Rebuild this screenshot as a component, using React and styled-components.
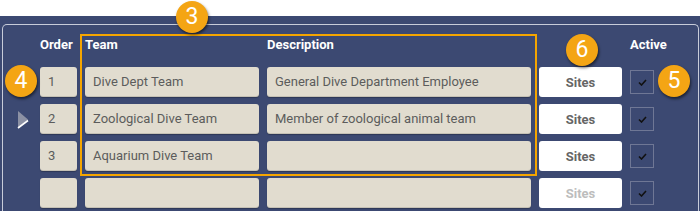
import React from 'react';
import styled, { createGlobalStyle, css } from 'styled-components';

const GlobalStyle = createGlobalStyle`
  html, body {
    margin: 0;
    padding: 0;
    background: #ffffff;
    font-family: Roboto, "Liberation Sans", Arial, sans-serif;
  }
`;

const rows = [
  { order: '1', team: 'Dive Dept Team', description: 'General Dive Department Employee' },
  { order: '2', team: 'Zoological Dive Team', description: 'Member of zoological animal team', current: true },
  { order: '3', team: 'Aquarium Dive Team', description: '' },
  { order: '', team: '', description: '', empty: true },
];

export default function App() {
  return (
    <Page>
      <GlobalStyle />
      <Panel>
        <Frame>
          <HeaderRow>
            <span />
            <HeaderCell>Order</HeaderCell>
            <HeaderCell>Team</HeaderCell>
            <HeaderCell>Description</HeaderCell>
            <span />
            <HeaderCell>Active</HeaderCell>
          </HeaderRow>
          <Body>
            {rows.map((row, i) => (
              <Row key={i}>
                <Indicator>
                  {row.current && (
                    <svg width="12" height="19" viewBox="0 0 12 19">
                      <polygon points="1,1 11,9.5 1,18" fill="#8c91a4" />
                      <line x1="1" y1="18" x2="11" y2="10.5" stroke="#ffffff" strokeWidth="1.6" />
                    </svg>
                  )}
                </Indicator>
                <Field>{row.order}</Field>
                <Field>{row.team}</Field>
                <Field>{row.description}</Field>
                <SitesButton $disabled={row.empty}>Sites</SitesButton>
                <CheckBox>
                  <svg width="9" height="7" viewBox="0 0 9 7">
                    <polyline points="1,3.5 3.5,6 8,1" fill="none" stroke="#111" strokeWidth="1.6" />
                  </svg>
                </CheckBox>
              </Row>
            ))}
          </Body>
        </Frame>
      </Panel>
      <Highlight />
      <Badge $x={192} $y={17}>3</Badge>
      <Badge $x={21} $y={81}>4</Badge>
      <Badge $x={674} $y={81}>5</Badge>
      <Badge $x={582} $y={50}>6</Badge>
    </Page>
  );
}

const columns = css`
  display: grid;
  grid-template-columns: 29px 37px 174px 264px 83px 24px;
  column-gap: 8px;
`;

const Page = styled.div`
  position: relative;
  width: 700px;
  height: 211px;
  overflow: hidden;
  padding-top: 16px;
  box-sizing: border-box;
`;

const Panel = styled.div`
  background: #3c4972;
  height: 195px;
  padding: 8px 1px 0 2px;
  box-sizing: border-box;
`;

const Frame = styled.div`
  height: 100%;
  border: 1px solid #c8ccda;
  border-bottom: none;
  border-radius: 5px 5px 0 0;
`;

const HeaderRow = styled.div`
  ${columns};
  padding-top: 12px;
  height: 15px;
  margin-bottom: 15px;
`;

const HeaderCell = styled.div`
  color: #ffffff;
  font-weight: 700;
  font-size: 13px;
  line-height: 15px;
`;

const Body = styled.div`
  display: flex;
  flex-direction: column;
  gap: 7px;
`;

const Row = styled.div`
  ${columns};
  height: 30px;
  align-items: center;
`;

const Indicator = styled.div`
  display: flex;
  align-items: center;
  justify-content: flex-end;
  padding-right: 3px;
`;

const Field = styled.div`
  height: 30px;
  background: #e1dccf;
  border-radius: 3px;
  box-shadow: inset 0 -1px 0 rgba(0, 0, 0, 0.12), 0 1px 1px rgba(0, 0, 0, 0.25);
  color: #5c5c5c;
  font-size: 13px;
  line-height: 30px;
  padding-left: 8px;
  white-space: nowrap;
  overflow: hidden;
`;

const SitesButton = styled.div`
  height: 30px;
  background: #ffffff;
  border-radius: 3px;
  display: flex;
  align-items: center;
  justify-content: center;
  font-size: 13px;
  font-weight: 700;
  color: ${p => (p.$disabled ? '#bdbdbd' : '#666666')};
`;

const CheckBox = styled.div`
  width: 24px;
  height: 24px;
  box-sizing: border-box;
  border: 1px solid #6f7795;
  display: flex;
  align-items: center;
  justify-content: center;
`;

const Highlight = styled.div`
  position: absolute;
  left: 80px;
  top: 34px;
  width: 457px;
  height: 142px;
  box-sizing: border-box;
  border: 2px solid #f5a500;
  pointer-events: none;
`;

const Badge = styled.div`
  position: absolute;
  left: ${p => p.$x - 16}px;
  top: ${p => p.$y - 16}px;
  width: 32px;
  height: 32px;
  border-radius: 50%;
  background: #f4a514;
  box-shadow: 1px 2px 3px rgba(0, 0, 0, 0.55);
  color: #ffffff;
  font-size: 23px;
  line-height: 32px;
  text-align: center;
`;
